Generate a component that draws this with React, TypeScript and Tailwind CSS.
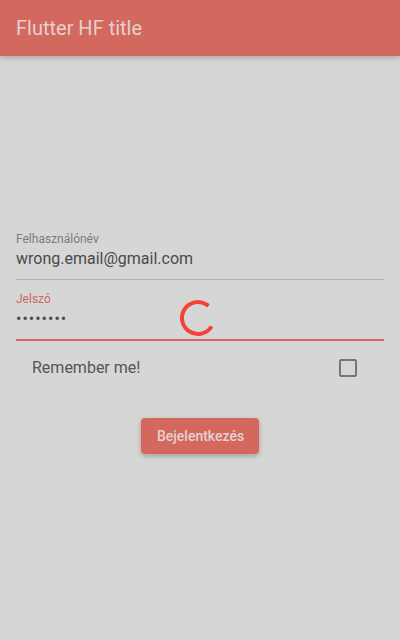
import React from 'react';

export default function App() {
  return (
    <div
      className="relative w-[400px] h-[640px] bg-[#d6d6d6] overflow-hidden"
      style={{ fontFamily: 'Roboto, "Liberation Sans", sans-serif' }}
    >
      {/* app bar */}
      <div className="relative z-10 h-14 bg-[#d3685f] flex items-center px-4 shadow-[0_2px_6px_rgba(0,0,0,0.22)]">
        <span className="text-[20px] text-[#e3d1cf]">Flutter HF title</span>
      </div>

      <div className="px-4 pt-[175px]">
        {/* username */}
        <div className="border-b border-[#b3b3b3] pb-[9px]">
          <div className="text-[12px] leading-[16px] text-[#7b7b7b]">Felhasználónév</div>
          <div className="text-[16px] leading-[22px] mt-[1px] text-[#4a4a4a]">wrong.email@gmail.com</div>
        </div>

        {/* password */}
        <div className="border-b-2 border-[#d3685f] pb-[9px] mt-[11px]">
          <div className="text-[12px] leading-[16px] text-[#d3685f]">Jelszó</div>
          <div className="text-[16px] leading-[22px] mt-[1px] text-[#4a4a4a] tracking-[1px]">••••••••</div>
        </div>

        {/* remember */}
        <div className="flex items-center justify-between pl-4 pr-[27px] h-[54px]">
          <span className="text-[16px] text-[#555555]">Remember me!</span>
          <div className="w-[18px] h-[18px] border-2 border-[#777777] rounded-[2px]" />
        </div>

        <div className="flex justify-center mt-[23px]">
          <button className="h-9 px-4 w-[118px] rounded bg-[#d3685f] text-[14px] font-medium text-[#e5d2d0] shadow-[0_2px_5px_rgba(0,0,0,0.25)]">
            Bejelentkezés
          </button>
        </div>
      </div>

      {/* loading spinner overlay */}
      <svg
        className="absolute left-[178px] top-[298px]"
        width="40"
        height="40"
        viewBox="0 0 40 40"
      >
        <circle
          cx="20"
          cy="20"
          r="16"
          fill="none"
          stroke="#f44336"
          strokeWidth="4"
          strokeDasharray="77.4 100"
          transform="rotate(32 20 20)"
        />
      </svg>
    </div>
  );
}
